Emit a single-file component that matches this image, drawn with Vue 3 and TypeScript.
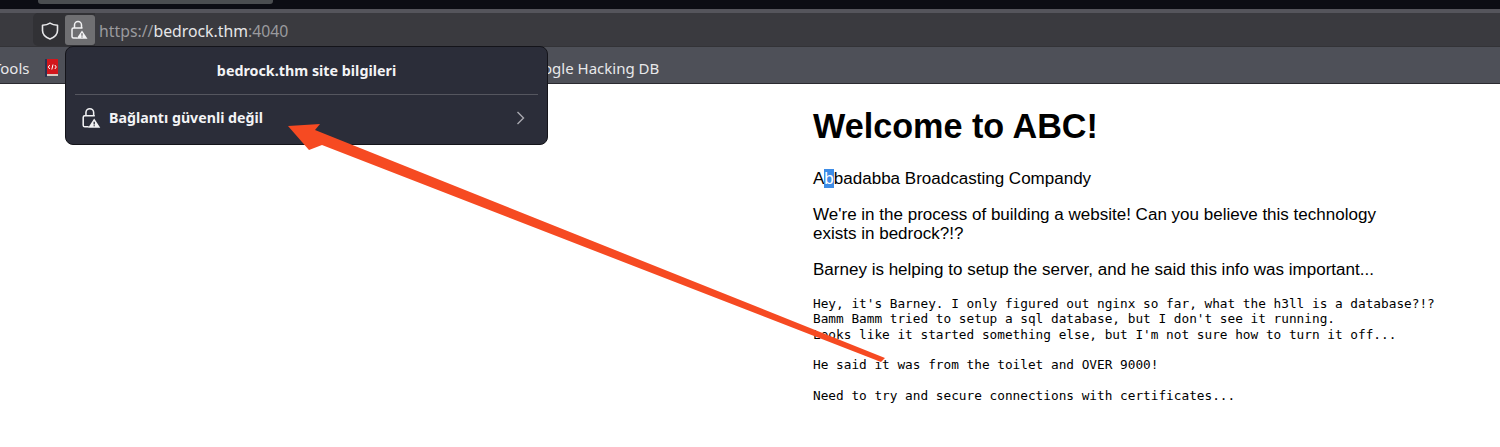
<script setup lang="ts">
const preLines: string = `Hey, it's Barney. I only figured out nginx so far, what the h3ll is a database?!?
Bamm Bamm tried to setup a sql database, but I don't see it running.
Looks like it started something else, but I'm not sure how to turn it off...

He said it was from the toilet and OVER 9000!

Need to try and secure connections with certificates...`
</script>

<template>
  <div class="shot">
    <div class="tabstrip"><div class="tab"></div></div>
    <div class="toolbar">
      <div class="identity">
        <span class="shield">
          <svg width="18" height="18" viewBox="0 0 18 18" fill="none">
            <path d="M9 1.100C11 2.400 13.600 3.100 16.500 3.300V8.500C16.500 12.500 13.400 15.400 9 17C4.600 15.400 1.500 12.500 1.500 8.500V3.300C4.400 3.100 7 2.400 9 1.100Z" stroke="#e8e8ea" stroke-width="1.600" stroke-linejoin="round"/>
          </svg>
        </span>
        <span class="lockbtn">
          <svg width="20" height="20" viewBox="0 0 20 20" fill="none">
            <path d="M4.500 8V5a3.500 3.500 0 0 1 7 0V8" stroke="#f2f2f4" stroke-width="1.500"/>
            <path d="M7 18H3.500A1.500 1.500 0 0 1 2 16.500V9.500A1.500 1.500 0 0 1 3.500 8H12.500" stroke="#f2f2f4" stroke-width="1.500"/>
            <path d="M12 10.500L17.500 18.800H6.500Z" fill="#f2f2f4"/>
            <path d="M12 13.300V15.800M12 16.600V17.600" stroke="#5d5d60" stroke-width="1.200"/>
          </svg>
        </span>
      </div>
      <span class="url"><span class="dim">https://</span>bedrock.thm<span class="dim">:4040</span></span>
    </div>
    <div class="bookmarks">
      <span class="bm-tools">Tools</span>
      <span class="bm-icon">
        <svg width="13" height="18" viewBox="0 0 13 18">
          <rect x="0" y="0" width="2" height="18" fill="#2b3350"/>
          <rect x="2" y="0" width="11" height="15" fill="#d3161c"/>
          <rect x="2" y="15" width="11" height="2" fill="#d9c9c0"/>
          <path d="M4.800 6 3.300 8 4.800 10M9.800 6l1.500 2-1.500 2M8 5.500 6.800 10.500" stroke="#fff" stroke-width="1" fill="none"/>
        </svg>
      </span>
      <span class="bm-ghdb">Google Hacking DB</span>
    </div>
    <div class="page">
      <main class="content">
        <h1>Welcome to ABC!</h1>
        <p>A<span class="sel">b</span>badabba Broadcasting Compandy</p>
        <p>We're in the process of building a website! Can you believe this technology exists in bedrock?!?</p>
        <p>Barney is helping to setup the server, and he said this info was important...</p>
        <pre>{{ preLines }}</pre>
      </main>
    </div>

    <section class="popup">
      <div class="popup-title">bedrock.thm site bilgileri</div>
      <div class="popup-sep"></div>
      <div class="popup-row">
        <svg width="22" height="22" viewBox="0 0 20 20" fill="none">
          <path d="M4.500 8V5a3.500 3.500 0 0 1 7 0V8" stroke="#f2f2f4" stroke-width="1.400"/>
          <path d="M7 18H3.500A1.500 1.500 0 0 1 2 16.500V9.500A1.500 1.500 0 0 1 3.500 8H12.500" stroke="#f2f2f4" stroke-width="1.400"/>
          <path d="M12 10.500L17.500 18.800H6.500Z" fill="#f2f2f4"/>
          <path d="M12 13.300V15.800M12 16.600V17.600" stroke="#2b2d39" stroke-width="1.200"/>
        </svg>
        <span class="popup-label">Bağlantı güvenli değil</span>
        <svg class="chev" width="10" height="14" viewBox="0 0 10 14" fill="none">
          <path d="M1.500 1l6 6-6 6" stroke="#a9a9b0" stroke-width="1.400"/>
        </svg>
      </div>
    </section>

    <svg class="arrow" width="1500" height="447" viewBox="0 0 1500 447">
      <path d="M288 126 L320 124 L315 130 L885 358 L881 362 L322 145 L309 150 Z" fill="#f64a22"/>
    </svg>
  </div>
</template>

<style>
html, body { margin: 0; background: #fff; }
</style>

<style scoped>
.shot {
  position: relative;
  width: 1500px;
  height: 447px;
  overflow: hidden;
  display: flex;
  flex-direction: column;
  background: #fff;
}
.tabstrip { height: 9px; background: #0c0d14; padding-left: 38px; }
.tab { width: 235px; height: 4px; background: #4a4d50; border-radius: 0 0 3px 3px; }
.toolbar {
  height: 38px;
  box-sizing: border-box;
  border-top: 4px solid #55555c;
  border-bottom: 1px solid #333337;
  background: #3a3a3f;
  padding-left: 33px;
  display: flex;
}
.identity {
  width: 62px;
  height: 33px;
  box-sizing: border-box;
  background: #313135;
  border-radius: 5px 0 0 5px;
  display: flex;
  padding: 2px 0 0 8px;
}
.shield { width: 18px; height: 18px; display: flex; margin: 7px 6px 0 0; }
.lockbtn {
  width: 30px;
  height: 30px;
  flex: none;
  background: #6f6f72;
  border-radius: 3px;
  display: flex;
  align-items: center;
  justify-content: center;
}
.url {
  font: 15.800px/33px "Noto Sans", "Open Sans", sans-serif;
  color: #e6e6e8;
  margin-left: 4px;
  padding-top: 2px;
}
.dim { color: #9a9a9e; }
.bookmarks {
  height: 37px;
  background: #4e5058;
  display: flex;
  align-items: center;
  font: 15px "Noto Sans", sans-serif;
  color: #e8e8ea;
  border-bottom: 1px solid #2a2a30;
  box-sizing: border-box;
  padding-top: 5px;
}
.bm-tools { margin-left: -7px; width: 52px; flex: none; }
.bm-icon { display: flex; width: 13px; flex: none; }
.bm-ghdb { margin-left: 465px; }
.page { flex: 1; background: #fff; }
.content { width: 590px; margin-left: 813px; color: #000; }
h1 {
  font: bold 34.200px/39px "Liberation Sans", Arial, sans-serif;
  margin: 23px 0 0;
}
p {
  font: 17.020px/19px "Liberation Sans", Arial, sans-serif;
  margin: 0 0 17px;
}
h1 + p { margin-top: 23px; }
.sel { background: #3d8ce6; color: #fff; }
pre {
  font: 12.750px/15.330px "DejaVu Sans Mono", monospace;
  margin: 0;
  overflow: visible;
}
.popup {
  position: absolute;
  left: 65px;
  top: 46px;
  width: 483px;
  height: 99px;
  box-sizing: border-box;
  background: #2b2d39;
  border: 1px solid #14141a;
  border-radius: 8px;
  padding: 0 9px;
  color: #f3f3f5;
  font-family: "Noto Sans", sans-serif;
}
.popup-title { height: 47px; line-height: 47px; text-align: center; font-size: 14.300px; font-weight: 700; }
.popup-sep { height: 1px; background: #55565f; }
.popup-row { display: flex; align-items: center; height: 45px; padding: 0 12px 0 6px; }
.popup-label { font-size: 14.200px; font-weight: 700; margin-left: 6px; flex: 1; }
.arrow { position: absolute; left: 0; top: 0; pointer-events: none; }
</style>
